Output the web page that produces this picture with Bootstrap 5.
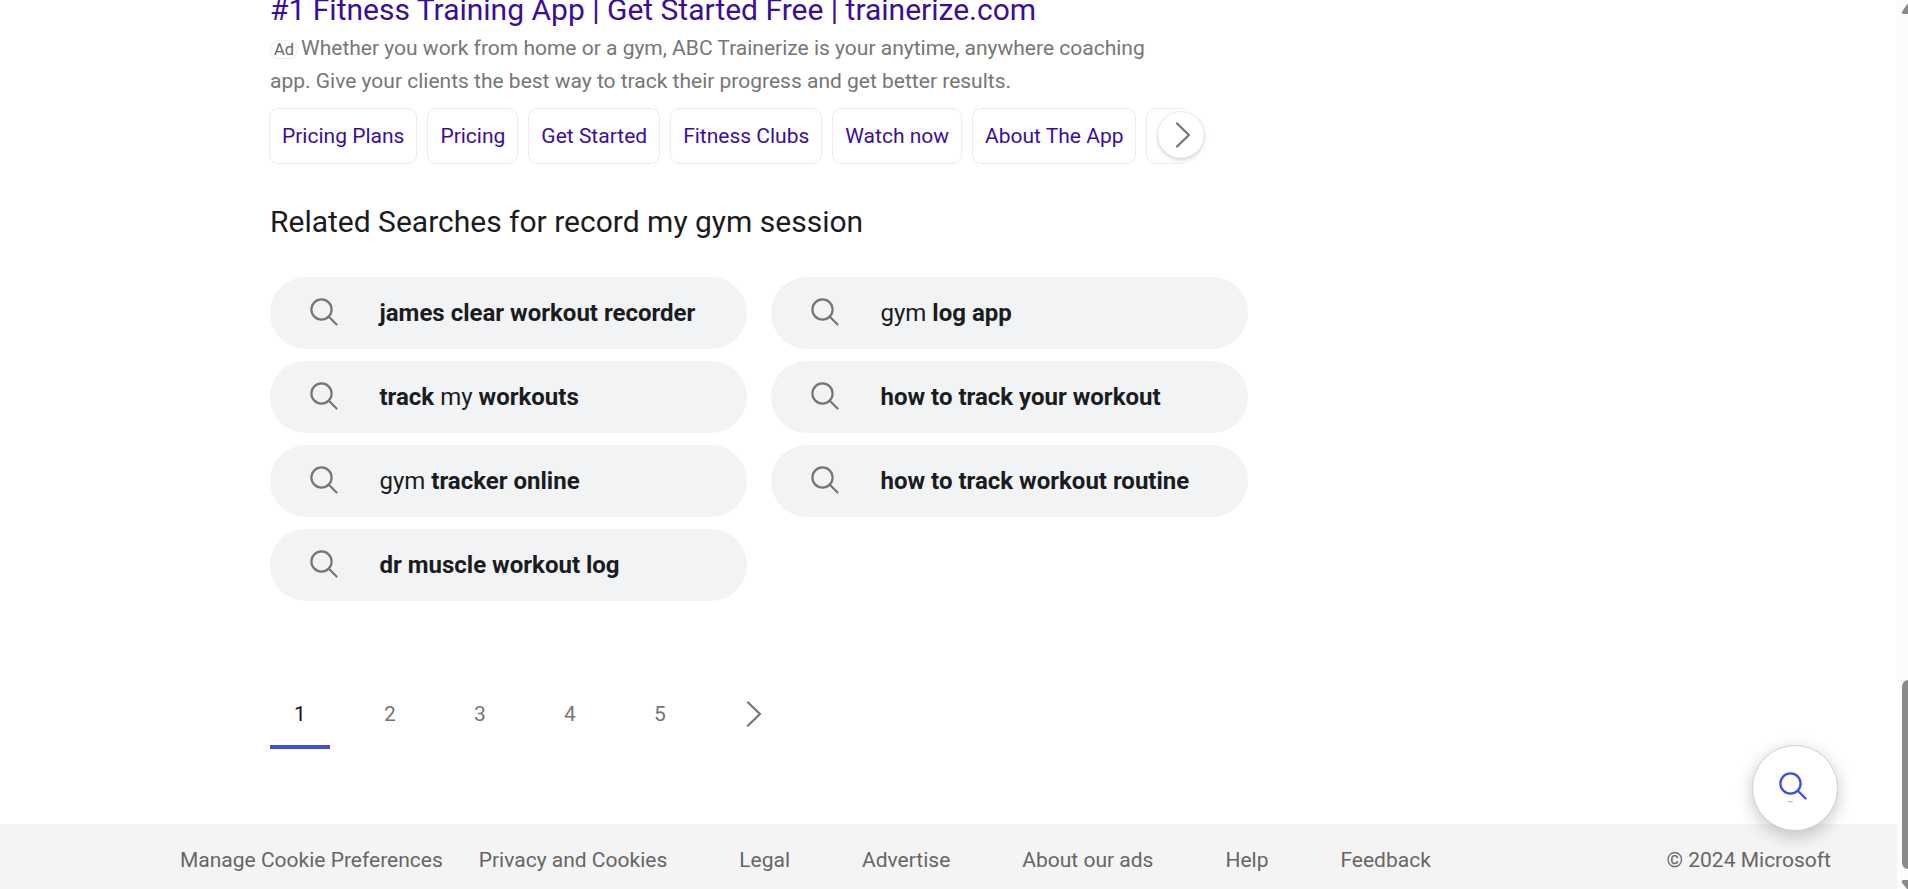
<!DOCTYPE html>
<html lang="en">
<head>
<meta charset="utf-8">
<title>record my gym session - Search</title>
<link rel="stylesheet" href="https://cdn.jsdelivr.net/npm/bootstrap@5.3.0/dist/css/bootstrap.min.css">
<style>
  body { font-family: Roboto, "Liberation Sans", sans-serif; font-size: 21px; color: #1a1c1f; height: 889px; overflow: hidden; background: #fff; }
  a { text-decoration: none; }
  svg { display: block; fill: none; stroke-linecap: round; stroke-linejoin: round; }
  .viewport { height: 889px; }
  .results { margin-left: 268px; padding-left: 2px; width: 980px; height: 824px; }
  .ad-title { font-size: 30px; line-height: 39px; color: #3b0e99; margin-top: -10px; height: 39px; }
  .ad-text { width: 900px; line-height: 33px; color: #767676; margin-top: 3px; height: 66px; }
  .ad-tag { display: inline-block; font-size: 16.5px; line-height: 17px; height: 19px; border: 1px solid #ececec; border-radius: 9px; padding: 0 3px; color: #666; margin-right: 3px; }
  .chip-row { margin: 10px 0 0 -1px; width: 936px; height: 56px; position: relative; }
  .chip-strip { width: 915px; gap: 10px; overflow: hidden; }
  .chip { flex: none; height: 56px; border: 1px solid #ececec; border-radius: 9px; color: #3b0e99; line-height: 54px; text-align: center; white-space: nowrap; padding: 0 12px; }
  .chip-next { position: absolute; right: 1px; top: 4px; width: 46px; height: 46px; background: #fff; box-shadow: 0 0 0 1px rgba(0,0,0,.05), 0 2px 5px rgba(0,0,0,.16); }
  .related-title { font-size: 30px; line-height: 39px; font-weight: 400; margin: 38px 0 0; height: 39px; }
  .related { display: grid; grid-template-columns: 477px 477px; gap: 12px 24px; margin-top: 36px; }
  .pill { height: 72px; border-radius: 36px; background: #f1f3f5; font-size: 24px; color: #1a1c1f; padding-left: 38px; line-height: 72px; }
  .pill svg { margin: -3px 39.5px 0 0; }
  .pager { margin-top: 84px; gap: 30px; }
  .pager a { width: 60px; height: 64px; line-height: 58px; text-align: center; color: #767676; }
  .pager a.current { color: #111; border-bottom: 4px solid #4050dc; }
  .pager svg { margin: 13px 0 0 22px; }
  .foot { height: 65px; background: #f4f4f4; padding: 0 66px 0 180px; line-height: 72px; }
  .foot a, .foot span { color: #666; white-space: nowrap; height: 65px; }
  .foot nav { gap: 72px; }
  .foot nav a:first-child { margin-right: -36px; }
  .fab { position: absolute; left: 1752px; top: 745px; width: 86px; height: 86px; padding: 0 3.5px 3.5px 0; background: #fff; border: 1px solid #d2d2d2; box-shadow: 0 5px 17px rgba(0,0,0,.22); }
  .scroll { width: 11px; height: 889px; background: #fcfcfc; overflow: hidden; }
  .scroll svg { fill: #8a8a8a; }
</style>
</head>
<body>
<svg width="0" height="0" class="position-absolute">
  <symbol id="lens" viewBox="0 0 32 32"><circle cx="13.5" cy="13.5" r="10.1"/><path d="M20.8 20.8L28.6 28.5"/></symbol>
  <symbol id="next" viewBox="0 0 24 32"><path d="M6 4.5L18 16L6 27.5"/></symbol>
</svg>
<div class="viewport d-flex">
  <div class="flex-grow-1 position-relative">
    <main class="results overflow-hidden">
      <div style="display:flow-root">
        <a href="#" class="ad-title d-block">#1 Fitness Training App | Get Started Free | trainerize.com</a>
      </div>
      <p class="ad-text mb-0"><span class="ad-tag">Ad</span>Whether you work from home or a gym, ABC Trainerize is your anytime, anywhere coaching app. Give your clients the best way to track their progress and get better results.</p>
      <div class="chip-row">
        <div class="chip-strip d-flex">
          <a href="#" class="chip">Pricing Plans</a>
          <a href="#" class="chip">Pricing</a>
          <a href="#" class="chip">Get Started</a>
          <a href="#" class="chip">Fitness Clubs</a>
          <a href="#" class="chip">Watch now</a>
          <a href="#" class="chip">About The App</a>
          <a href="#" class="chip" aria-label="More"><svg width="70" height="54"></svg></a>
        </div>
        <a href="#" class="chip-next rounded-circle d-flex align-items-center justify-content-center" aria-label="Next"><svg class="ms-1" width="24" height="32" stroke="#767676" stroke-width="2.3"><use href="#next"/></svg></a>
      </div>
      <h2 class="related-title">Related Searches for record my gym session</h2>
      <div class="related">
        <a href="#" class="pill d-flex align-items-center"><svg width="32" height="32" stroke="#767676" stroke-width="2.2"><use href="#lens"/></svg><span><b>james clear workout recorder</b></span></a>
        <a href="#" class="pill d-flex align-items-center"><svg width="32" height="32" stroke="#767676" stroke-width="2.2"><use href="#lens"/></svg><span>gym <b>log app</b></span></a>
        <a href="#" class="pill d-flex align-items-center"><svg width="32" height="32" stroke="#767676" stroke-width="2.2"><use href="#lens"/></svg><span><b>track</b> my <b>workouts</b></span></a>
        <a href="#" class="pill d-flex align-items-center"><svg width="32" height="32" stroke="#767676" stroke-width="2.2"><use href="#lens"/></svg><span><b>how to track your workout</b></span></a>
        <a href="#" class="pill d-flex align-items-center"><svg width="32" height="32" stroke="#767676" stroke-width="2.2"><use href="#lens"/></svg><span>gym <b>tracker online</b></span></a>
        <a href="#" class="pill d-flex align-items-center"><svg width="32" height="32" stroke="#767676" stroke-width="2.2"><use href="#lens"/></svg><span><b>how to track workout routine</b></span></a>
        <a href="#" class="pill d-flex align-items-center"><svg width="32" height="32" stroke="#767676" stroke-width="2.2"><use href="#lens"/></svg><span><b>dr muscle workout log</b></span></a>
      </div>
      <nav class="pager d-flex">
        <a href="#" class="current">1</a><a href="#">2</a><a href="#">3</a><a href="#">4</a><a href="#">5</a>
        <a href="#" aria-label="Next page"><svg width="24" height="32" stroke="#767676" stroke-width="2.3"><use href="#next"/></svg></a>
      </nav>
    </main>
    <footer class="foot d-flex justify-content-between">
      <nav class="d-flex">
        <a href="#">Manage Cookie Preferences</a><a href="#">Privacy and Cookies</a><a href="#">Legal</a><a href="#">Advertise</a><a href="#">About our ads</a><a href="#">Help</a><a href="#">Feedback</a>
      </nav>
      <span>© 2024 Microsoft</span>
    </footer>
    <a href="#" class="fab rounded-circle d-flex align-items-center justify-content-center" aria-label="Search"><svg width="32" height="34" viewBox="0 -1 32 34" stroke="#4050dc" stroke-width="2.3"><use href="#lens" width="32" height="32"/><path d="M11.5 31.7h4" stroke="#aaa" stroke-width="1"/></svg></a>
  </div>
  <div class="scroll flex-shrink-0">
    <svg width="11" height="889" viewBox="0 0 11 889"><path d="M11 4L10 4.5L4.8 12Q4.6 14 6.5 14H11Z"/><path d="M11 680Q5 680.5 5 687V862Q5 868.5 11 869Z"/><path d="M11 880H6.5Q4.3 880 4.8 882.5L10 889H11Z"/></svg>
  </div>
</div>
<script src="https://cdn.jsdelivr.net/npm/bootstrap@5.3.0/dist/js/bootstrap.bundle.min.js"></script>
</body>
</html>
